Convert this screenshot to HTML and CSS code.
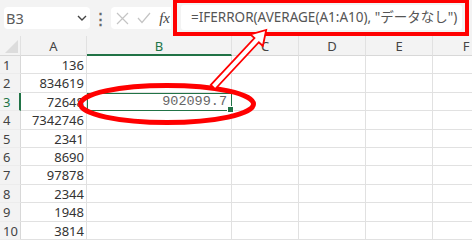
FILE: index.html
```html
<!DOCTYPE html>
<html>
  <head>
    <title>Sheet</title>
    <meta charset="utf-8"/>
    <link rel="stylesheet" href="styles.css">
  </head>
  <body>
    <div class="app">
      <div class="toolbar">
        <div class="namebox">
          <span>B3</span>
          <svg class="chevron" width="10" height="6" viewBox="0 0 10 6"><path d="M1 1 L5 5 L9 1" fill="none" stroke="#444" stroke-width="1.4"/></svg>
        </div>
        <div class="dots">&#x22ee;</div>
        <div class="fbuttons">
          <svg width="13" height="13" viewBox="0 0 13 13"><path d="M1 1 L12 12 M12 1 L1 12" stroke="#c4c4c4" stroke-width="1.2"/></svg>
          <svg width="14" height="12" viewBox="0 0 14 12"><path d="M1 6 L5 10.5 L13 1" fill="none" stroke="#c4c4c4" stroke-width="1.2"/></svg>
          <span class="fx">fx</span>
        </div>
        <div class="formula-wrap">
          <div class="formula">=IFERROR(AVERAGE(A1:A10), "データなし")</div>
        </div>
      </div>

      <div class="sheet">
        <div class="corner"></div>
        <div class="colhead">A</div>
        <div class="colhead active">B</div>
        <div class="colhead">C</div>
        <div class="colhead">D</div>
        <div class="colhead">E</div>
        <div class="colhead">F</div>

        <div class="rowhead">1</div><div class="cell num">136</div><div class="cell"></div><div class="cell"></div><div class="cell"></div><div class="cell"></div><div class="cell"></div>
        <div class="rowhead">2</div><div class="cell num">834619</div><div class="cell"></div><div class="cell"></div><div class="cell"></div><div class="cell"></div><div class="cell"></div>
        <div class="rowhead active">3</div><div class="cell num">72648</div><div class="cell selected">902099.7</div><div class="cell"></div><div class="cell"></div><div class="cell"></div><div class="cell"></div>
        <div class="rowhead">4</div><div class="cell num">7342746</div><div class="cell"></div><div class="cell"></div><div class="cell"></div><div class="cell"></div><div class="cell"></div>
        <div class="rowhead">5</div><div class="cell num">2341</div><div class="cell"></div><div class="cell"></div><div class="cell"></div><div class="cell"></div><div class="cell"></div>
        <div class="rowhead">6</div><div class="cell num">8690</div><div class="cell"></div><div class="cell"></div><div class="cell"></div><div class="cell"></div><div class="cell"></div>
        <div class="rowhead">7</div><div class="cell num">97878</div><div class="cell"></div><div class="cell"></div><div class="cell"></div><div class="cell"></div><div class="cell"></div>
        <div class="rowhead">8</div><div class="cell num">2344</div><div class="cell"></div><div class="cell"></div><div class="cell"></div><div class="cell"></div><div class="cell"></div>
        <div class="rowhead">9</div><div class="cell num">1948</div><div class="cell"></div><div class="cell"></div><div class="cell"></div><div class="cell"></div><div class="cell"></div>
        <div class="rowhead">10</div><div class="cell num">3814</div><div class="cell"></div><div class="cell"></div><div class="cell"></div><div class="cell"></div><div class="cell"></div>
      </div>

      <!-- annotation: ellipse around result + arrow to formula -->
      <svg class="marks" width="472" height="240" viewBox="0 0 472 240">
        <ellipse cx="167" cy="104" rx="86.5" ry="18.5" fill="none" stroke="#f00" stroke-width="5"/>
        <polygon transform="translate(213 87) rotate(-47)"
          points="0,-3 64,-3 64,-8.5 78,0 64,8.5 64,3 0,3"
          fill="#fff" stroke="#f00" stroke-width="1.8" stroke-linejoin="miter"/>
      </svg>
    </div>
  </body>
</html>
```

FILE: styles.css
```css
body {
  margin: 0;
  background: #fff;
  font-family: "Noto Sans", "Noto Sans CJK JP", sans-serif;
  color: #333;
}
.app {
  position: relative;
  width: 472px;
  height: 240px;
  overflow: hidden;
}

.toolbar {
  display: flex;
  align-items: center;
  height: 36px;
  background: #f3f3f3;
}
.namebox {
  display: flex;
  align-items: center;
  justify-content: space-between;
  box-sizing: border-box;
  width: 86px;
  height: 22px;
  margin-left: 4px;
  padding: 0 3px 0 2px;
  background: #fff;
  border-radius: 4px;
  font-size: 14.5px;
  color: #5a5a5a;
}
.dots {
  width: 21px;
  text-align: center;
  font-size: 15px;
  font-weight: bold;
  color: #666;
}
.fbuttons {
  display: flex;
  align-items: center;
  justify-content: space-between;
  box-sizing: border-box;
  width: 60px;
  height: 22px;
  padding: 0 1px 0 5px;
  background: #fff;
  border-radius: 4px 0 0 4px;
}
.fx {
  font-family: "Liberation Serif", serif;
  font-style: italic;
  font-size: 15px;
  color: #444;
}
.formula-wrap {
  box-sizing: border-box;
  width: 296px;
  height: 36px;
  margin-left: 2px;
  padding: 2px 3px 2px 4px;
  border: 4px solid #f00;
  border-top-width: 3px;
  align-self: flex-start;
}
.formula {
  height: 100%;
  padding-left: 10px;
  background: #fff;
  border-radius: 3px;
  font-size: 13.5px;
  line-height: 24px;
  color: #555;
  white-space: nowrap;
}

.sheet {
  display: grid;
  grid-template-columns: 21px 66px 145px 67px 67px 67px 67px;
  grid-template-rows: 20px repeat(10, 18.4px);
  font-size: 13px;
}
.corner, .colhead, .rowhead {
  background: #f3f3f3;
  color: #444;
}
.corner {
  position: relative;
  border-right: 1px solid #e1e1e1;
  border-bottom: 1px solid #d8d8d8;
}
.corner::after {
  content: "";
  position: absolute;
  right: 2px;
  bottom: 2px;
  border-style: solid;
  border-width: 0 0 13px 13px;
  border-color: transparent transparent #dcdcdc transparent;
}
.colhead {
  border-right: 1px solid #e1e1e1;
  border-bottom: 1px solid #d8d8d8;
  text-align: center;
  line-height: 20px;
}
.colhead.active {
  color: #217346;
  border-bottom: 2px solid #217346;
}
.rowhead {
  border-right: 1px solid #d8d8d8;
  border-bottom: 1px solid #ececec;
  padding-left: 3px;
  line-height: 18px;
  font-size: 13px;
}
.rowhead.active {
  color: #217346;
  border-right: 2px solid #217346;
}
.cell {
  border-right: 1px solid #e1e1e1;
  border-bottom: 1px solid #e1e1e1;
  line-height: 18px;
}
.num {
  text-align: right;
  padding-right: 2px;
  color: #333;
}
.selected {
  position: relative;
  outline: 1.5px solid #217346;
  outline-offset: -1px;
  text-align: right;
  padding-right: 4px;
  font-family: "Liberation Mono", monospace;
  font-size: 13.5px;
  color: #666;
}
.selected::after {
  content: "";
  position: absolute;
  right: -3px;
  bottom: -3px;
  width: 5px;
  height: 5px;
  background: #217346;
  border: 1px solid #fff;
}

.marks {
  position: absolute;
  left: 0;
  top: 0;
  pointer-events: none;
}
```
